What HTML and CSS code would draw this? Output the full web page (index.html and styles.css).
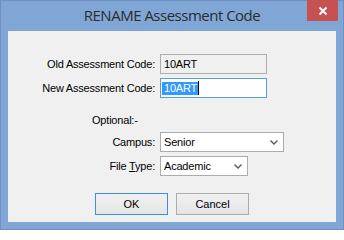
FILE: index.html
```html
<!DOCTYPE html>
<html>
<head>
<meta charset="utf-8">
<link rel="stylesheet" href="styles.css">
</head>
<body>
<div class="window">
  <div class="titlebar">
    <span class="spacer"></span>
    <span class="title">RENAME Assessment Code</span>
    <span class="close">
      <svg width="10" height="10" viewBox="0 0 10 10"><path d="M1.5 1.5 L8.5 8.5 M8.5 1.5 L1.5 8.5" stroke="#fff" stroke-width="2" fill="none"/></svg>
    </span>
  </div>
  <div class="client">
    <div class="form">
      <label class="lbl">Old Assessment Code:</label>
      <div class="field disabled">10ART</div>
      <label class="lbl">New Assessment Code:</label>
      <div class="field focus"><span class="sel">10ART</span><span class="caret"></span></div>
      <div class="optional">Optional:-</div>
      <label class="lbl">Campus:</label>
      <div class="select wide"><span>Senior</span><svg class="chev" width="8" height="5" viewBox="0 0 8 5"><path d="M0.5 0.5 L4 4 L7.5 0.5" stroke="#5a5a5a" stroke-width="1.4" fill="none"/></svg></div>
      <label class="lbl">File <u>T</u>ype:</label>
      <div class="select narrow"><span>Academic</span><svg class="chev" width="8" height="5" viewBox="0 0 8 5"><path d="M0.5 0.5 L4 4 L7.5 0.5" stroke="#5a5a5a" stroke-width="1.4" fill="none"/></svg></div>
    </div>
    <div class="buttons">
      <button class="btn default">OK</button>
      <button class="btn">Cancel</button>
    </div>
  </div>
</div>
</body>
</html>
```
FILE: styles.css
```css
html, body {
  margin: 0;
  padding: 0;
}
body {
  width: 344px;
  height: 230px;
  overflow: hidden;
}
.window {
  box-sizing: border-box;
  width: 344px;
  height: 230px;
  background: #80a6d5;
  border: 1px solid #6f90c0;
  display: flex;
  flex-direction: column;
}
.titlebar {
  height: 30px;
  display: grid;
  grid-template-columns: 1fr auto 1fr;
  align-items: start;
}
.title {
  font-family: "Open Sans", "Noto Sans", sans-serif;
  font-size: 15px;
  color: #2c2c2c;
  line-height: 29px;
  letter-spacing: -0.5px;
}
.close {
  justify-self: end;
  margin-right: 5px;
  margin-top: -1px;
  width: 31px;
  height: 21px;
  background: #c75050;
  display: flex;
  align-items: center;
  justify-content: center;
}
.client {
  margin: 0 7px 7px 7px;
  flex: 1;
  background: #f0f0f0;
  padding-top: 23px;
  font-family: "Liberation Sans", Arial, sans-serif;
  font-size: 11px;
  letter-spacing: -0.2px;
  color: #000;
}
.form {
  display: grid;
  grid-template-columns: 147px auto;
  column-gap: 5px;
  row-gap: 4px;
  align-items: center;
  justify-items: start;
}
.lbl {
  justify-self: end;
}
.field {
  box-sizing: border-box;
  width: 107px;
  height: 20px;
  border: 1px solid #adadad;
  background: #fff;
  padding-left: 3px;
  display: flex;
  align-items: center;
}
.field.disabled {
  background: #f0f0f0;
}
.field.focus {
  border-color: #569de5;
  padding-left: 1px;
}
.sel {
  background: #3399ff;
  color: #fff;
  line-height: 13px;
  padding: 0 1px 0 2px;
}
.caret {
  width: 1px;
  height: 14px;
  background: #000;
}
.optional {
  grid-column: 1 / 3;
  margin-left: 84px;
  margin-top: 10px;
  height: 16px;
  line-height: 16px;
}
.select {
  box-sizing: border-box;
  height: 20px;
  border: 1px solid #acacac;
  background: #fff;
  padding: 0 5px 0 3px;
  display: flex;
  align-items: center;
  justify-content: space-between;
}
.select.wide { width: 124px; }
.select.narrow { width: 88px; }
.chev { margin-top: 1px; }
.buttons {
  display: flex;
  justify-content: center;
  gap: 8px;
  margin-top: 17px;
}
.btn {
  box-sizing: border-box;
  width: 73px;
  height: 22px;
  border: 1px solid #acacac;
  background: linear-gradient(#f0f0f0, #e5e5e5);
  font-family: "Liberation Sans", Arial, sans-serif;
  font-size: 11px;
  color: #000;
  padding: 0;
  border-radius: 0;
}
.btn.default {
  border-color: #3c8fe3;
}
```
